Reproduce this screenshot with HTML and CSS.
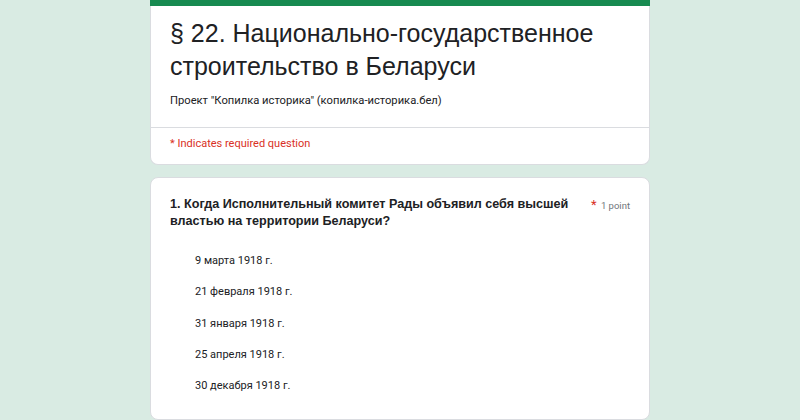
FILE: index.html
```html
<!DOCTYPE html>
<html lang="ru">
<head>
    <meta charset="UTF-8">
    <title>§ 22. Национально-государственное строительство в Беларуси</title>
    <link rel="stylesheet" href="styles.css">
</head>
<body>

    <div class="container">
        <!-- Form header -->
        <div class="card header-card">
            <div class="header-top"></div>
            <div class="header-body">
                <h1 class="form-title">§ 22. Национально-государственное строительство в Беларуси</h1>
                <p class="form-desc">Проект "Копилка историка" (копилка-историка.бел)</p>
            </div>
            <div class="required-note">* Indicates required question</div>
        </div>

        <!-- Question 1 -->
        <div class="card question-card">
            <div class="question-head">
                <div class="question-title">1. Когда Исполнительный комитет Рады объявил себя высшей властью на территории Беларуси?</div>
                <div class="question-points"><span class="star">*</span> 1 point</div>
            </div>
            <ul class="options">
                <li>9 марта 1918 г.</li>
                <li>21 февраля 1918 г.</li>
                <li>31 января 1918 г.</li>
                <li>25 апреля 1918 г.</li>
                <li>30 декабря 1918 г.</li>
            </ul>
        </div>
    </div>

</body>
</html>
```

FILE: styles.css
```css
body {
    font-family: 'Roboto', 'Liberation Sans', sans-serif;
    background-color: #d9ebe3;
    margin: 0;
    padding: 0;
    color: #202124;
}

.container {
    width: 500px;
    margin: 0 auto;
    display: flex;
    flex-direction: column;
    gap: 12px;
}

.card {
    background-color: #fff;
    border-radius: 8px;
    border: 1px solid #dadce0;
}

.header-card {
    border-top: none;
    border-radius: 0 0 8px 8px;
}

.header-top {
    height: 6px;
    background-color: #178a50;
    margin: 0 -1px;
}

.header-body {
    padding: 11px 19px 18px;
    border-bottom: 1px solid #dadce0;
}

.form-title {
    font-family: 'Liberation Sans', Arial, sans-serif;
    font-size: 25px;
    font-weight: 400;
    line-height: 33px;
    margin: 0 0 10px;
    color: #202124;
}

.form-desc {
    font-size: 11.2px;
    line-height: 16px;
    margin: 0;
}

.required-note {
    font-size: 11px;
    color: #d93025;
    padding: 8px 19px 12px;
    line-height: 16px;
}

.question-card {
    padding: 18px 19px 25px;
}

.question-head {
    display: flex;
    justify-content: space-between;
    gap: 8px;
}

.question-title {
    font-family: 'Liberation Sans', Arial, sans-serif;
    font-size: 12.6px;
    font-weight: 700;
    line-height: 17px;
    flex: 1;
}

.question-points {
    font-size: 9.5px;
    color: #70757a;
    white-space: nowrap;
    padding-top: 1px;
}

.question-points .star {
    color: #d93025;
    font-size: 13px;
    margin-right: 2px;
}

.options {
    list-style: none;
    margin: 23px 0 0;
    padding: 0 0 0 25px;
    display: flex;
    flex-direction: column;
    gap: 15.3px;
}

.options li {
    font-size: 11px;
    line-height: 16px;
}
```
